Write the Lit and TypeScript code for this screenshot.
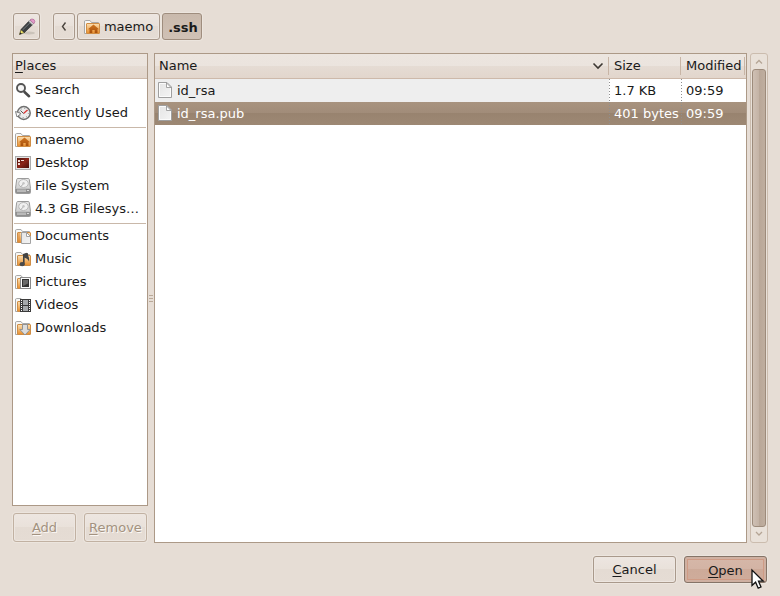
import { LitElement, html, css, svg, nothing } from "lit";
import { customElement, property, state } from "lit/decorators.js";
import { classMap } from "lit/directives/class-map.js";

const folderBack = svg`
  <path d="M.5 14.500V3Q.5 1.500 1.500 1.500H6L7.500 3.500H14.500V8" fill="#f7f7f5" stroke="#a8a8a8"/>
  <path d="M.5 14.500H3" stroke="#a8a8a8"/>`;

const folder = svg`${folderBack}
  <rect x="2.500" y="4.500" width="13" height="10" rx=".5" fill="url(#amber)" stroke="#cf8d45"/>`;

const gradients = svg`<defs>
  <linearGradient id="amber" x1="0" y1="0" x2="0" y2="1"><stop offset="0" stop-color="#fbe0b4"/><stop offset="1" stop-color="#e88d2a"/></linearGradient>
  <linearGradient id="house" x1="0" y1="0" x2="0" y2="1"><stop offset="0" stop-color="#cf7420"/><stop offset="1" stop-color="#a8510c"/></linearGradient>
  <linearGradient id="metal" x1="0" y1="0" x2="0" y2="1"><stop offset="0" stop-color="#e9e9e9"/><stop offset="1" stop-color="#c4c4c4"/></linearGradient>
  <linearGradient id="wine" x1="0" y1="0" x2="1" y2="1"><stop offset="0" stop-color="#45100b"/><stop offset=".5" stop-color="#8c2417"/><stop offset="1" stop-color="#4a0e08"/></linearGradient>
  <linearGradient id="paper" x1="0" y1="0" x2="1" y2="1"><stop offset="0" stop-color="#e4e4e4"/><stop offset="1" stop-color="#f4f4f4"/></linearGradient>
</defs>`;

const glyphs: Record<string, unknown> = {
  search: svg`
    <path d="M9.500 10L14 14.200" stroke="#4a4a4a" stroke-width="2.600" stroke-linecap="round" fill="none"/>
    <circle cx="6" cy="6" r="4" fill="#f6f6f6" stroke="#555" stroke-width="1.900"/>`,
  recent: svg`
    <circle cx="8.800" cy="8" r="6.400" fill="#ececec" stroke="#707070" stroke-width="1.500"/>
    <circle cx="8.800" cy="8" r="4.600" fill="none" stroke="#888" stroke-dasharray="1 2.600"/>
    <path d="M8.500 8.500L12.500 5" stroke="#d33" stroke-width="1.200"/>
    <path d="M5.500 5.500L8.500 8.500" stroke="#555"/>
    <path d="M.5 6.500L6 8.500L2 12Z" fill="#fafafa" stroke="#777" stroke-width=".9"/>`,
  home: svg`${folder}
    <path d="M9.500 5.500L15 10.300H13.500V14H10.700V11H8.300V14H5.500V10.300H4Z" fill="url(#house)"/>`,
  desktop: svg`
    <rect x=".5" y="1.500" width="15" height="13" fill="#e4e4e4" stroke="#acacac"/>
    <rect x="2" y="3" width="12" height="10" fill="url(#wine)"/>
    <path d="M3 5h2v2H3zM3 8h2v2H3zM6 5h3v1H6z" fill="#f4dcd6"/>`,
  drive: svg`
    <path d="M1.700 1.500Q1.800.5 2.800.5H13.200Q14.200.5 14.300 1.500L15.500 10.500V14.500Q15.500 15.500 14.500 15.500H1.500Q.5 15.500.5 14.500V10.500Z" fill="url(#metal)" stroke="#9b9b9b"/>
    <ellipse cx="8.500" cy="5.500" rx="4.800" ry="4" fill="#f0f0f0" stroke="#b8b8b8"/>
    <circle cx="8.500" cy="5.200" r="1.200" fill="#c4c4c4"/>
    <path d="M5.500 9L8 6.200" stroke="#aaa"/>
    <path d="M1 10.800H15V14.500Q15 15 14.500 15H1.500Q1 15 1 14.500Z" fill="#8f8f8f"/>
    <path d="M2 11.500H11V14H2Z" fill="#b9b9b9"/><path d="M12 12.500H14" stroke="#ddd"/>`,
  documents: svg`${folder}
    <path d="M6.500 4.500H11.500L15.500 8.500V15.500H6.500Z" fill="url(#paper)" stroke="#a2a2a2"/>
    <path d="M11.500 4.500V8.500H15.500Z" fill="#fff" stroke="#a2a2a2"/>
    <path d="M3 5H5V14H3Z" fill="#d9873a" opacity=".5"/>`,
  music: svg`${folder}
    <path d="M8.800 13V3.500L12 2.500" fill="none" stroke="#444" stroke-width="1.600"/>
    <path d="M8 3.500L13 2V4.500Q14.500 6.500 14 10.500Q13 7.500 9 6.500Z" fill="#444"/>
    <ellipse cx="7.200" cy="13.200" rx="2.600" ry="2.100" fill="#4a4a4a"/>`,
  pictures: svg`${folder}
    <rect x="5.500" y="3.500" width="10" height="11" fill="#fafafa" stroke="#8a8a8a"/>
    <rect x="7" y="5" width="7" height="8" fill="#333"/><path d="M8 6H13V9.500L8 12Z" fill="#6a6a6a"/>`,
  videos: svg`${folder}
    <rect x="5" y="2" width="11" height="13" fill="#3b3b3b"/>
    <path d="M8 3h5v5H8zM8 9h5v5H8z" fill="#a5a8aa"/>
    <path d="M6.500 3V15M14.500 3V15" stroke="#fff" stroke-dasharray="1 1"/>`,
  downloads: svg`${folder}
    <path d="M7.500 4.500H12.500V9.500H15.200L10 15L4.800 9.500H7.500Z" fill="#dcdcdc" stroke="#929292"/>`,
  file: svg`
    <path d="M1.500.5H10L14.500 5V15.500H1.500Z" fill="url(#paper)" stroke="#9f9f9f"/>
    <path d="M2.500 14.500V1.500H9M13.500 6V14.500H2.500" fill="none" stroke="#fbfbfb"/>
    <path d="M9.500 1V5.500H14Z" fill="#fff" stroke="#8f8f8f" stroke-width=".8"/>`,
  pencil: svg`
    <ellipse cx="10" cy="14" rx="6" ry="1.500" fill="#b9b2a8" opacity=".6"/>
    <path d="M.5 15.500L2 10.500L5.500 13.500Z" fill="#f0e26a" stroke="#4d4a25" stroke-width=".7"/>
    <path d="M.5 15.500L1.200 13.300L2.800 14.700Z" fill="#222"/>
    <path d="M2 10.500L9.600 2.400L13.400 5.800L5.500 13.500Z" fill="#3c4043" stroke="#1f2021" stroke-width=".6"/>
    <path d="M3.500 11L11 3.800" stroke="#74797c" stroke-width="1"/>
    <path d="M9.600 2.400L11.300 1L14.800 4.300L13.300 5.900Z" fill="#cfcfcf" stroke="#777" stroke-width=".5"/>
    <path d="M11 .9Q12.800-.8 15 .6Q16.800 2.500 14.900 4.700Z" fill="#e49bcb" stroke="#a65b8c" stroke-width=".6"/>`,
  left: svg`<path d="M9.500 3.500L6.500 7.500L9.500 11.500" fill="none" stroke="#4a443e" stroke-width="1.400"/>`,
  down: svg`<path d="M3.500 5.500L8 10L12.500 5.500" fill="none" stroke="#3d3833" stroke-width="1.600"/>`,
  scrollUp: svg`<path d="M5 9.500L8 6.500L11 9.500" fill="none" stroke="#b5a595" stroke-width="1.300"/>`,
  scrollDown: svg`<path d="M5 5L8 8L11 5" fill="none" stroke="#b5a595" stroke-width="1.300"/>`,
};

@customElement("ui-icon")
export class UiIcon extends LitElement {
  @property() name = "";

  static styles = css`
    :host { display: block; flex: none; width: 16px; height: 16px; }
    svg { display: block; overflow: visible; }
  `;

  render() {
    return html`<svg width="16" height="16" viewBox="0 0 16 16" fill="none" aria-hidden="true">${gradients}${glyphs[this.name] ?? nothing}</svg>`;
  }
}

interface Place { icon: string; label: string; }

const placeGroups: Place[][] = [
  [
    { icon: "search", label: "Search" },
    { icon: "recent", label: "Recently Used" },
  ],
  [
    { icon: "home", label: "maemo" },
    { icon: "desktop", label: "Desktop" },
    { icon: "drive", label: "File System" },
    { icon: "drive", label: "4.3 GB Filesys…" },
  ],
  [
    { icon: "documents", label: "Documents" },
    { icon: "music", label: "Music" },
    { icon: "pictures", label: "Pictures" },
    { icon: "videos", label: "Videos" },
    { icon: "downloads", label: "Downloads" },
  ],
];

const files = [
  { name: "id_rsa", size: "1.7 KB", modified: "09:59" },
  { name: "id_rsa.pub", size: "401 bytes", modified: "09:59" },
];

@customElement("app-root")
export class FileChooser extends LitElement {
  @state() private selected = "id_rsa.pub";

  static styles = css`
    :host {
      display: flex;
      flex-direction: column;
      box-sizing: border-box;
      min-height: 100vh;
      padding: 12px;
      background: #e6ddd5;
      color: #1a1a1a;
      font: 13px/22px "DejaVu Sans", sans-serif;
    }
    * { box-sizing: border-box; }
    button { font: inherit; color: inherit; margin: 0; padding: 0; white-space: nowrap; }
    u { text-decoration: underline; text-underline-offset: 2px; text-decoration-thickness: 1px; }

    .btn {
      display: flex;
      align-items: center;
      justify-content: center;
      height: 27px;
      border: 1px solid #a9998b;
      border-radius: 3px;
      background: linear-gradient(#ede6e1, #e9e1da 49%, #e4dbd3 50%, #e5dcd4);
      box-shadow: inset 0 0 0 1px #ede6e0, 0 0 0 1px #ece5de;
    }
    .btn:disabled {
      height: 29px;
      color: #a39280;
      border-color: #c1b1a2;
      text-shadow: 1px 1px 0 #fbf8f5;
    }

    .pathbar { display: flex; height: 29px; padding: 1px; gap: 1px; margin-bottom: 12px; }
    .edit { width: 27px; margin-right: 12px; }
    .back { width: 22px; margin-right: 1px; }
    .crumb { width: 83px; gap: 4px; }
    .current {
      width: 40px;
      padding: 2px 0 0 2px;
      margin-left: 1px;
      font-weight: bold;
      background: linear-gradient(#c9b9ac, #d0c1b5);
      border-color: #9f8d7e;
      box-shadow: 0 0 0 1px #ece5de;
    }

    .panes { display: grid; grid-template-columns: 136px 6px minmax(0, 1fr) 21px; flex: 1; }
    .side { display: flex; flex-direction: column; }
    .frame { background: #fff; border: 1px solid #ac9987; }
    .places { flex: 1; }
    .heading {
      height: 25px;
      padding: 1px 2px;
      margin: 0;
      font: inherit;
      border-bottom: 1px solid #cdb9aa;
      background: linear-gradient(#ece5df, #ebe4de 49%, #e5dcd4 50%, #e2d6cc);
    }
    .group { list-style: none; margin: 0; padding: 0; }
    .group + .group::before {
      content: "";
      display: block;
      height: 4px;
      margin: 0 1px;
      background: linear-gradient(#c9b8a9, #c9b8a9) 0 2px / 100% 1px no-repeat;
    }
    .place {
      display: flex;
      align-items: center;
      gap: 4px;
      width: 100%;
      height: 23px;
      padding: 0 2px 1px;
      border: 0;
      background: none;
    }
    .side-actions { display: grid; grid-template-columns: 1fr 1fr; gap: 8px; padding: 7px 1px 1px; }

    .grip { align-self: center; justify-self: center; width: 4px; height: 7px;
      background: repeating-linear-gradient(#b9a999 0 1px, transparent 1px 3px); }

    .files { width: 100%; table-layout: fixed; border-collapse: separate; border-spacing: 0; }
    .name-col { width: auto; }
    .size-col { width: 72px; }
    .date-col { width: 65px; }
    .files th {
      height: 25px;
      padding: 0;
      text-align: left;
      font-weight: normal;
      border-bottom: 1px solid #cdb9aa;
      background: linear-gradient(#ece5df, #ebe4de 49%, #e5dcd4 50%, #e2d6cc);
    }
    .sort {
      display: flex;
      align-items: center;
      justify-content: space-between;
      width: 100%;
      height: 18px;
      padding: 0 2px 0 4px;
      border: 0;
      border-right: 1px solid #c8b5a6;
      background: none;
    }
    .files th + th .sort { padding: 0 0 0 5px; }
    .files th:last-child .sort { width: calc(100% - 1px); }
    .files td { height: 23px; padding: 0 4px; line-height: 23px; vertical-align: top; white-space: nowrap; }
    .files td + td { padding-left: 5px; padding-right: 0; background: repeating-linear-gradient(#8f8f8f 0 1px, transparent 1px 3px) 0 0 / 1px 100% no-repeat; }
    .files .sorted { background: #eee; }
    .cell { display: flex; gap: 4px; margin-left: -2px; }
    .cell ui-icon { margin-top: 3px; }
    .row { cursor: default; }
    .picked { color: #fff; background: linear-gradient(#a8937f, #a18c79 49%, #98836f 50%, #9d8874); }
    .files .picked .sorted { background: none; }

    .scrollbar {
      display: flex;
      flex-direction: column;
      align-items: center;
      width: 18px;
      margin-left: 3px;
      border: 1px solid #cbbcae;
      border-radius: 3px;
      background: #e9e1d9;
    }
    .scrollbar ui-icon { height: 15px; }
    .thumb {
      flex: 1;
      width: 14px;
      border: 1px solid #9d8b7b;
      border-radius: 3px;
      background: linear-gradient(90deg, #cfc0b4, #c4b3a5 49%, #b9a798 50%, #bfae9f);
    }

    .actions { display: flex; justify-content: flex-end; gap: 8px; padding: 13px 1px 1px; }
    .action { position: relative; width: 83px; }
    .primary {
      padding-top: 2px;
      border-color: #857467;
      background: linear-gradient(#d6b8a9, #d3b3a4 49%, #cdaa99 50%, #cfac9b);
      box-shadow: inset 0 0 0 2px #cfb0a1, inset 0 0 0 3px #cf9b85, 0 0 0 1px #ece5de;
    }
    .pointer { position: absolute; left: 66px; top: 12px; z-index: 1; overflow: visible; }
  `;

  render() {
    return html`
      <nav class="pathbar" aria-label="Path">
        <button class="btn edit" aria-label="Type a file name"><ui-icon name="pencil"></ui-icon></button>
        <button class="btn back" aria-label="Back"><ui-icon name="left"></ui-icon></button>
        <button class="btn crumb"><ui-icon name="home"></ui-icon>maemo</button>
        <button class="btn current" aria-current="true">.ssh</button>
      </nav>
      <main class="panes">
        <section class="side">
          <nav class="frame places" aria-labelledby="places">
            <h2 class="heading" id="places"><u>P</u>laces</h2>
            ${placeGroups.map((group) => html`
              <ul class="group">
                ${group.map((place) => html`
                  <li><button class="place"><ui-icon name=${place.icon}></ui-icon>${place.label}</button></li>`)}
              </ul>`)}
          </nav>
          <div class="side-actions">
            <button class="btn" disabled><span><u>A</u>dd</span></button>
            <button class="btn" disabled><span><u>R</u>emove</span></button>
          </div>
        </section>
        <div class="grip"></div>
        <section class="frame">
          <table class="files">
            <colgroup><col class="name-col"><col class="size-col"><col class="date-col"></colgroup>
            <thead>
              <tr>
                <th aria-sort="ascending"><button class="sort">Name<ui-icon name="down"></ui-icon></button></th>
                <th><button class="sort">Size</button></th>
                <th><button class="sort">Modified</button></th>
              </tr>
            </thead>
            <tbody>
              ${files.map((file) => html`
                <tr class=${classMap({ row: true, picked: file.name === this.selected })}
                    @click=${() => (this.selected = file.name)}>
                  <td class="sorted"><div class="cell"><ui-icon name="file"></ui-icon>${file.name}</div></td>
                  <td>${file.size}</td>
                  <td>${file.modified}</td>
                </tr>`)}
            </tbody>
          </table>
        </section>
        <div class="scrollbar" aria-hidden="true">
          <ui-icon name="scrollUp"></ui-icon>
          <div class="thumb"></div>
          <ui-icon name="scrollDown"></ui-icon>
        </div>
      </main>
      <footer class="actions">
        <button class="btn action"><span><u>C</u>ancel</span></button>
        <button class="btn action primary"><span><u>O</u>pen</span>
          <svg class="pointer" width="14" height="21" viewBox="0 0 14 21" aria-hidden="true">
            <path d="M1 1V16.500L4.600 13.200L7.200 19.200L10 18L7.500 12.200H12.300Z" fill="#fff" stroke="#111" stroke-width="1.300"/>
          </svg>
        </button>
      </footer>
    `;
  }
}
